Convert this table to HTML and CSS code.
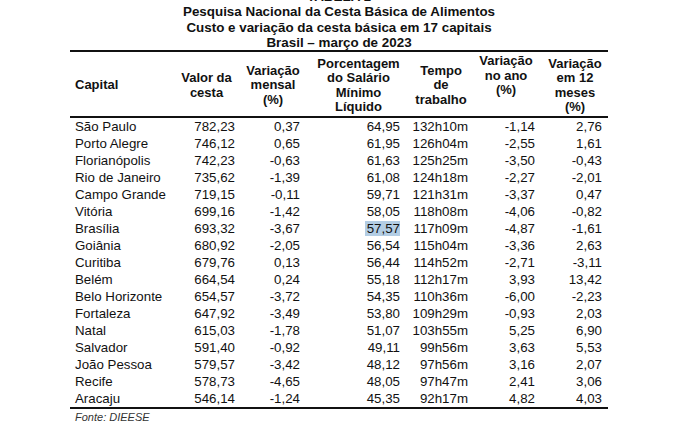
FILE: index.html
```html
<!DOCTYPE html>
<html lang="pt-BR">
<head>
<meta charset="utf-8">
<title>Cesta Básica – março de 2023</title>
<link rel="stylesheet" href="styles.css">
</head>
<body>
<div class="page">
  <div class="title">
    <div>TABELA 1</div>
    <div>Pesquisa Nacional da Cesta Básica de Alimentos</div>
    <div>Custo e variação da cesta básica em 17 capitais</div>
    <div>Brasil – março de 2023</div>
  </div>
  <table class="data">
    <colgroup>
      <col class="c1"><col class="c2"><col class="c3"><col class="c4"><col class="c5"><col class="c6"><col class="c7">
    </colgroup>
    <thead>
      <tr>
        <th class="left">Capital</th>
        <th>Valor da<br>cesta</th>
        <th>Variação<br>mensal<br>(%)</th>
        <th>Porcentagem<br>do Salário<br>Mínimo<br>Líquido</th>
        <th>Tempo<br>de<br>trabalho</th>
        <th class="top">Variação<br>no ano<br>(%)</th>
        <th>Variação<br>em 12<br>meses<br>(%)</th>
      </tr>
    </thead>
    <tbody>
      <tr><td>São Paulo</td><td>782,23</td><td>0,37</td><td>64,95</td><td>132h10m</td><td>-1,14</td><td>2,76</td></tr>
      <tr><td>Porto Alegre</td><td>746,12</td><td>0,65</td><td>61,95</td><td>126h04m</td><td>-2,55</td><td>1,61</td></tr>
      <tr><td>Florianópolis</td><td>742,23</td><td>-0,63</td><td>61,63</td><td>125h25m</td><td>-3,50</td><td>-0,43</td></tr>
      <tr><td>Rio de Janeiro</td><td>735,62</td><td>-1,39</td><td>61,08</td><td>124h18m</td><td>-2,27</td><td>-2,01</td></tr>
      <tr><td>Campo Grande</td><td>719,15</td><td>-0,11</td><td>59,71</td><td>121h31m</td><td>-3,37</td><td>0,47</td></tr>
      <tr><td>Vitória</td><td>699,16</td><td>-1,42</td><td>58,05</td><td>118h08m</td><td>-4,06</td><td>-0,82</td></tr>
      <tr><td>Brasília</td><td>693,32</td><td>-3,67</td><td><span class="sel">57,57</span></td><td>117h09m</td><td>-4,87</td><td>-1,61</td></tr>
      <tr><td>Goiânia</td><td>680,92</td><td>-2,05</td><td>56,54</td><td>115h04m</td><td>-3,36</td><td>2,63</td></tr>
      <tr><td>Curitiba</td><td>679,76</td><td>0,13</td><td>56,44</td><td>114h52m</td><td>-2,71</td><td>-3,11</td></tr>
      <tr><td>Belém</td><td>664,54</td><td>0,24</td><td>55,18</td><td>112h17m</td><td>3,93</td><td>13,42</td></tr>
      <tr><td>Belo Horizonte</td><td>654,57</td><td>-3,72</td><td>54,35</td><td>110h36m</td><td>-6,00</td><td>-2,23</td></tr>
      <tr><td>Fortaleza</td><td>647,92</td><td>-3,49</td><td>53,80</td><td>109h29m</td><td>-0,93</td><td>2,03</td></tr>
      <tr><td>Natal</td><td>615,03</td><td>-1,78</td><td>51,07</td><td>103h55m</td><td>5,25</td><td>6,90</td></tr>
      <tr><td>Salvador</td><td>591,40</td><td>-0,92</td><td>49,11</td><td>99h56m</td><td>3,63</td><td>5,53</td></tr>
      <tr><td>João Pessoa</td><td>579,57</td><td>-3,42</td><td>48,12</td><td>97h56m</td><td>3,16</td><td>2,07</td></tr>
      <tr><td>Recife</td><td>578,73</td><td>-4,65</td><td>48,05</td><td>97h47m</td><td>2,41</td><td>3,06</td></tr>
      <tr><td>Aracaju</td><td>546,14</td><td>-1,24</td><td>45,35</td><td>92h17m</td><td>4,82</td><td>4,03</td></tr>
    </tbody>
  </table>
  <div class="source">Fonte: DIEESE</div>
</div>
</body>
</html>
```

FILE: styles.css
```css
html, body {
  margin: 0;
  padding: 0;
  background: #fff;
}
body {
  font-family: "Liberation Sans", Arial, sans-serif;
  color: #111;
  overflow: hidden;
}
.page {
  width: 689px;
  height: 423px;
  overflow: hidden;
}
.title {
  margin-top: -11px;
  margin-left: 70px;
  width: 538px;
  text-align: center;
  font-family: "Liberation Sans Narrow", "Liberation Sans", Arial, sans-serif;
  font-weight: bold;
  font-size: 13.4px;
  line-height: 15.3px;
}
.data {
  margin-left: 70px;
  width: 538px;
  border-collapse: collapse;
  table-layout: fixed;
  border-top: 2px solid #111;
  border-bottom: 2px solid #111;
  font-size: 13.3px;
}
.c1 { width: 102px; }
.c2 { width: 69px; }
.c3 { width: 64px; }
.c4 { width: 107px; }
.c5 { width: 58px; }
.c6 { width: 72px; }
.c7 { width: 66px; }
.data thead tr {
  height: 66px;
  border-bottom: 2px solid #111;
}
.data th {
  font-weight: bold;
  font-size: 13px;
  line-height: 14.5px;
  text-align: center;
  vertical-align: middle;
  padding: 3px 0 0;
}
.data th.left {
  text-align: left;
  padding-left: 5px;
}
.data th.top {
  vertical-align: top;
  padding-top: 2px;
}
.data td {
  height: 17px;
  padding: 0;
  line-height: 17px;
  text-align: right;
  white-space: nowrap;
}
.data td:nth-child(1) { text-align: left; padding-left: 5px; }
.data td:nth-child(2) { padding-right: 6px; }
.data td:nth-child(3) { padding-right: 5px; }
.data td:nth-child(4) { padding-right: 12px; }
.data td:nth-child(5) { padding-right: 2px; }
.data td:nth-child(6) { padding-right: 7px; }
.data td:nth-child(7) { padding-right: 6px; }
.sel {
  background: #b3cde4;
  padding-left: 2px;
}
.source {
  margin-left: 75px;
  margin-top: 1px;
  font-size: 11px;
  font-style: italic;
  color: #333;
  line-height: 14px;
}
```
